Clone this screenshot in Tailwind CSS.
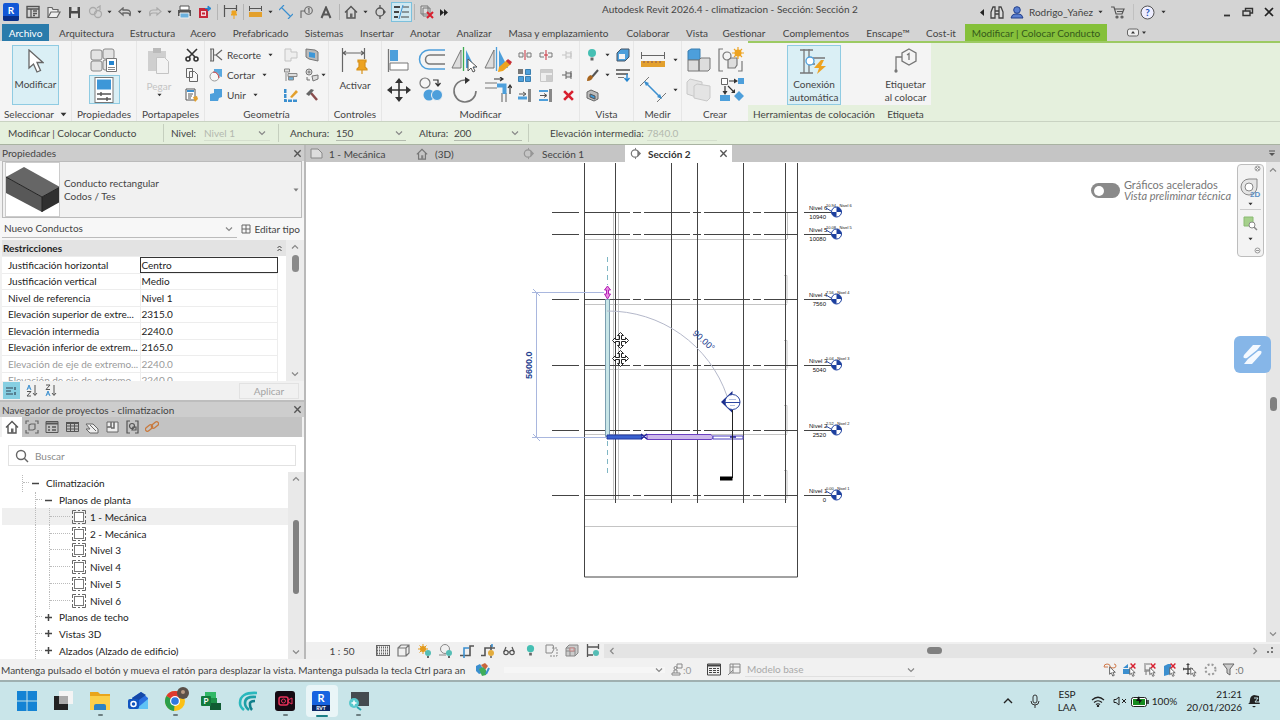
<!DOCTYPE html>
<html lang="es">
<head>
  <meta charset="UTF-8">
  <meta name="viewport" content="width=device-width, initial-scale=1.0">
  <title>Autodesk Revit 2026.4 - climatizacion</title>
  <script src="https://cdn.jsdelivr.net/npm/@tailwindcss/browser@4"></script>
</head>
<body class="flex h-screen flex-col overflow-hidden bg-[#f2f2f2] font-['Lato','Open_Sans',sans-serif] text-[10px] leading-[14px] text-[#444]">

  <!-- Shared icons -->
  <svg class="hidden">
    <symbol id="down" viewBox="0 0 6 4"><path d="M.5.5h5L3 3.5z" fill="#333"/></symbol>
    <symbol id="chev" viewBox="0 0 8 6"><path d="M1 1.500l3 3 3-3" fill="none" stroke="#888" stroke-width="1.200"/></symbol>
    <symbol id="close" viewBox="0 0 10 10"><path d="M1.500 1.500l7 7M8.500 1.500l-7 7" stroke="#555" stroke-width="1.500"/></symbol>
    <symbol id="cursor" viewBox="0 0 16 24"><path d="M1 1v18l4.500-4 3.500 8 3.500-1.500-3.500-8H15z" fill="#fff" stroke="#666" stroke-width="1.300"/></symbol>
    <symbol id="redx" viewBox="0 0 10 10"><path d="M1 1l8 8M9 1l-8 8" stroke="#d8202f" stroke-width="2.400"/></symbol>
    <symbol id="section" viewBox="0 0 14 14"><path d="M7 1v2M7 11v2" stroke="#777"/><circle cx="6.500" cy="7" r="4" fill="none" stroke="#777" stroke-width="1.300"/><path d="M9 3l4 4-4 4z" fill="#777"/></symbol>
    <symbol id="sheet" viewBox="0 0 14 14"><rect x="2.500" y="2.500" width="9" height="9" fill="#fff" stroke="#777"/><path d="M.5 4V.5H4M10 .5h3.500V4M13.500 10v3.500H10M4 13.500H.5V10M6 .5h2M6 13.500h2M.5 6v2M13.500 6v2" fill="none" stroke="#666"/></symbol>
    <symbol id="bulb" viewBox="0 0 10 14"><circle cx="5" cy="5" r="4" fill="#45bfb3"/><path d="M3.500 9.500h3v3h-3z" fill="#666"/></symbol>
    <symbol id="house" viewBox="0 0 14 14"><path d="M1 7.500L7 1.500l6 6M3 6v7h8V6" fill="none" stroke="#555" stroke-width="1.400"/><path d="M6 8.500h2.500V13H6z" fill="#666"/></symbol>
    <symbol id="sel" viewBox="0 0 8 12"><path d="M.7.7v8.500l2-1.800 1.600 3.800 1.700-.8-1.600-3.500h2.800z" fill="#fff" stroke="#555"/></symbol>
  </svg>

  <!-- Title bar -->
  <header class="bg-[#d4d4d4]">
    <div class="flex h-6 items-center">
      <div class="grid shrink-0 grid-cols-[22px_22px_20px_21px_20px_9px_21px_9px_21px_9px_21px_20px_5px_21px_4px_21px_9px_21px_19px_22px_4px_20px_9px_20px_22px_5px_20px_14px] items-center justify-items-center">
        <button aria-label="Revit"><svg width="16" height="18"><rect width="16" height="18" rx="2" fill="#1257d6"/><path d="M0 13h16v3a2 2 0 0 1-2 2H2a2 2 0 0 1-2-2z" fill="#0a2f86"/><text x="8" y="11" font-size="10" font-weight="700" fill="#fff" text-anchor="middle">R</text></svg></button>
        <button aria-label="Inicio"><svg width="14" height="14" fill="none" stroke="#555"><rect x="1" y="1.500" width="12" height="11" stroke-width="1.400"/><path d="M1 4h12M5 4v8M7 6h4M7 8.500h4M7 10.500h2" stroke-width="1.300"/></svg></button>
        <button aria-label="Abrir"><svg width="14" height="13" fill="#eee" stroke="#666" stroke-width="1.200"><path d="M1 11V1.500h4l1 2h5V6"/><path d="M1 11.500L4 6h9l-3 5.500z"/></svg></button>
        <button aria-label="Guardar"><svg width="13" height="13"><path d="M1 1h11v11H1z" fill="#4b4b4b"/><path d="M3.500 1h6v4h-6zM3 7.500h7V12H3z" fill="#ddd"/></svg></button>
        <button aria-label="Sincronizar"><svg width="15" height="14" fill="none" stroke="#aaa" stroke-width="1.300"><circle cx="5" cy="6" r="3.500"/><circle cx="10" cy="9" r="3.500"/><path d="M9 3l3-2v4"/></svg></button>
        <svg width="5" height="4"><use href="#down"/></svg>
        <button aria-label="Deshacer"><svg width="14" height="10" fill="none" stroke="#666" stroke-width="1.300"><path d="M5 1L1 4.500 5 8V6h4q3 0 3 3 1.500-6-3-6H5z"/></svg></button>
        <svg width="5" height="4"><use href="#down"/></svg>
        <button aria-label="Rehacer"><svg width="14" height="10" fill="none" stroke="#aaa" stroke-width="1.200"><path d="M9 1l4 3.500L9 8V6H5Q2 6 2 9 .5 3 5 3h4z"/></svg></button>
        <svg width="5" height="4"><use href="#down"/></svg>
        <button aria-label="Imprimir"><svg width="15" height="14"><path d="M3 1h9v4H3z" fill="#fff" stroke="#555"/><path d="M1 5h13v6H1z" fill="#555"/><path d="M3 8h9v5H3z" fill="#6bb1de" stroke="#eee"/></svg></button>
        <button aria-label="Exportar"><svg width="14" height="14"><path d="M1 3h9v10H1z" fill="#c6273a"/><path d="M3 6h5v5H3z" fill="#f3d8db"/><path d="M4 7.500h3v2H4z" fill="#c6273a"/><path d="M7 3.500h4M10 1l3 2.500L10 6z" fill="#2585cf" stroke="#2585cf"/></svg></button>
        <span class="h-4 w-px bg-[#b4b4b4]"></span>
        <button aria-label="Cota"><svg width="15" height="14" fill="none" stroke="#555"><path d="M1.500 0v12M13.500 0v6M2 3.500h11" stroke-width="1.200"/><path d="M9 6h4v3l1 1H8l1-1zM11 10v4" fill="#eda321" stroke="#eda321"/></svg></button>
        <span class="h-4 w-px bg-[#b4b4b4]"></span>
        <button aria-label="Medir"><svg width="15" height="12"><path d="M1 2.500h13M1.500 0v5M13.500 0v5" stroke="#555"/><path d="M1 6h13v5H1z" fill="#e3a02d"/></svg></button>
        <svg width="5" height="4"><use href="#down"/></svg>
        <button aria-label="Cota alineada"><svg width="14" height="14" stroke="#3b8fcf" stroke-width="1.200"><path d="M2.500 2.500l9 9M0 5l5-5M9 14l5-5"/></svg></button>
        <button aria-label="Etiqueta"><svg width="14" height="13" fill="none" stroke="#666" stroke-width="1.100"><circle cx="9.500" cy="4.500" r="3.800"/><path d="M6 5H2v7M9 3l1-.5V7"/></svg></button>
        <button aria-label="Texto"><svg width="12" height="13"><path d="M1.500 12L6 1.500 10.500 12M3.500 8.500h5" fill="none" stroke="#555" stroke-width="2"/></svg></button>
        <span class="h-4 w-px bg-[#b4b4b4]"></span>
        <button aria-label="Vista 3D"><svg width="14" height="14"><use href="#house"/></svg></button>
        <svg width="5" height="4"><use href="#down"/></svg>
        <button aria-label="Sección"><svg width="14" height="14" fill="none" stroke="#555" stroke-width="1.300"><circle cx="7" cy="7" r="4"/><path d="M7 0v3M7 11v3"/><path d="M10 4l3 3-3 3z" fill="#555" stroke="none"/></svg></button>
        <button aria-label="Líneas finas" class="border border-[#7cc0dc] bg-[#cfe8f1] p-[2px]"><svg width="15" height="14"><path d="M0 2h6M0 7h5M0 12h4" stroke="#444" stroke-width="2"/><path d="M9 2h6M8 7h7M7 12h8" stroke="#444"/><path d="M9 0L5 14" stroke="#3b8fcf"/></svg></button>
        <span class="h-4 w-px bg-[#b4b4b4]"></span>
        <button aria-label="Cerrar inactivas"><svg width="14" height="14" fill="#ddd" stroke="#777"><path d="M1 1h7v8H1zM3 3h7v8H3z"/><path d="M7 7l6 6M13 7l-6 6" stroke="#d8202f" stroke-width="2"/></svg></button>
        <button aria-label="Más"><svg width="10" height="7" fill="#222"><path d="M1 0l4 3.500L1 7zM5 0l4 3.500L5 7z"/></svg></button>
      </div>
      <h1 class="w-[384px] shrink-0 pb-[6px] pl-[151px] whitespace-nowrap">Autodesk Revit 2026.4 - climatizacion - Sección: Sección 2</h1>
      <div class="ml-auto grid shrink-0 grid-cols-[10px_20px_20px_68px_10px_26px_4px_24px_8px_49px_21px_21px_22px] items-center justify-items-center">
        <svg width="4" height="7"><path d="M4 0v7L0 3.500z" fill="#222"/></svg>
        <button aria-label="Buscar"><svg width="14" height="13" fill="#ddd" stroke="#444" stroke-width="1.300"><path d="M1 6l2-5h2v11H1zM13 6l-2-5H9v11h4zM5 5h4v3H5z"/></svg></button>
        <button aria-label="Usuario"><svg width="14" height="13" fill="#5a7fd0" stroke="#23408c"><circle cx="7" cy="4" r="3.300"/><path d="M1 12q1-4 4-4h4q3 0 4 4z"/></svg></button>
        <button class="whitespace-nowrap">Rodrigo_Yañez</button>
        <svg width="5" height="4"><use href="#down"/></svg>
        <button aria-label="Tienda"><svg width="15" height="13" fill="none" stroke="#555" stroke-width="1.200"><path d="M0 1h3l2 7h6l2-5H4M6 5.500h6"/><circle cx="6" cy="11" r="1"/><circle cx="11" cy="11" r="1"/></svg></button>
        <span class="h-4 w-px bg-[#c0c0c0]"></span>
        <button aria-label="Ayuda"><svg width="15" height="15"><circle cx="7.500" cy="7.500" r="6.500" fill="#eef" stroke="#555"/><text x="7.500" y="11" font-size="10" font-weight="700" fill="#2456b8" text-anchor="middle">?</text></svg></button>
        <svg width="5" height="4"><use href="#down"/></svg>
        <span></span>
        <button aria-label="Minimizar"><svg width="8" height="10"><path d="M1 8.500h6" stroke="#333" stroke-width="1.800"/></svg></button>
        <button aria-label="Restaurar"><svg width="12" height="10" fill="none" stroke="#333" stroke-width="1.400"><path d="M1 4h7v4.500H1zM3.500 4V1.500h7V6H8"/></svg></button>
        <button aria-label="Cerrar"><svg width="10" height="10"><path d="M1 1l8 8M9 1L1 9" stroke="#222" stroke-width="1.700"/></svg></button>
      </div>
    </div>
    <nav class="grid h-[17px] grid-cols-[47px_75px_57px_44px_71px_56px_50px_46px_52px_117px_62px_36px_58px_86px_58px_48px_142px_60px] items-center justify-items-center pl-[2px] whitespace-nowrap">
      <a href="#" class="flex h-full w-full items-center justify-center bg-[#2a7bab] text-white">Archivo</a>
      <a href="#">Arquitectura</a>
      <a href="#">Estructura</a>
      <a href="#">Acero</a>
      <a href="#">Prefabricado</a>
      <a href="#">Sistemas</a>
      <a href="#">Insertar</a>
      <a href="#">Anotar</a>
      <a href="#">Analizar</a>
      <a href="#">Masa y emplazamiento</a>
      <a href="#">Colaborar</a>
      <a href="#">Vista</a>
      <a href="#">Gestionar</a>
      <a href="#">Complementos</a>
      <a href="#">Enscape™</a>
      <a href="#">Cost-it</a>
      <a href="#" class="flex h-full w-full items-center justify-center bg-[#85c03a] text-[#34591b]">Modificar | Colocar Conducto</a>
      <button aria-label="Minimizar cinta"><svg width="20" height="9"><rect x=".5" y="1" width="11" height="7" rx="2" fill="#eee" stroke="#666"/><path d="M4 5.500h4L6 3zM15 3.500h4L17 6z" fill="#333"/></svg></button>
    </nav>
  </header>

  <!-- Ribbon -->
  <section class="flex h-[80px] shrink-0 bg-[#e5f0dd] whitespace-nowrap">
    <div class="grid grid-cols-[72px_65px_68px_124px_53px_198px_54px_48px_66px] bg-[#f4f4f4]">
      <div class="flex flex-col items-center border-r border-[#e6e6e6] pt-1">
        <button class="flex h-[60px] w-[47px] flex-col items-center gap-1 border border-[#8fcbe2] bg-[#daeff5] pt-[3px]"><svg width="16" height="24"><use href="#cursor"/></svg>Modificar</button>
        <button class="flex items-center gap-[6px] pt-[2px]">Seleccionar <svg width="7" height="5"><use href="#down"/></svg></button>
      </div>
      <div class="flex flex-col items-center border-r border-[#e6e6e6] pt-1">
        <div class="flex h-[60px] flex-col items-center gap-[2px] pt-[2px]">
          <button aria-label="Propiedades de tipo"><svg width="28" height="26" stroke="#888" fill="#e3e3e3"><rect x="1" y="3" width="11" height="10" rx="2"/><rect x="13" y="2" width="11" height="10" rx="2"/><rect x="1" y="14" width="11" height="10" rx="2"/><rect x="13" y="13" width="11" height="10" rx="2"/><path d="M16.500 11.500h10v13h-10z" fill="#fff" stroke="#777"/><path d="M19 14h5v4h-5z" fill="#2585cf" stroke="none"/><path d="M18 20.500h7M18 22.500h7"/></svg></button>
          <button aria-label="Propiedades" class="flex h-[29px] w-[31px] items-center justify-center border border-[#8fcbe2] bg-[#daeff5]"><svg width="20" height="26"><rect x="1" y=".5" width="18" height="25" fill="#fff" stroke="#777"/><path d="M3 2.500h14v10H3z" fill="#3d97d8"/><path d="M3 17h14M3 22h14M7 15v4M13 20v4" stroke="#555" stroke-width="1.400"/></svg></button>
        </div>
        <span class="pt-[2px]">Propiedades</span>
      </div>
      <div class="flex flex-col items-center border-r border-[#e6e6e6] pt-1">
        <div class="grid h-[60px] w-full grid-cols-[44px_22px]">
          <button disabled class="flex flex-col items-center pt-[2px] text-[#c4c4c4]"><svg width="24" height="28"><path d="M1 4h18v20H1z" fill="#cfcfcf"/><path d="M6 1h8v5H6z" fill="#bbb"/><path d="M9.500 10.500h8l4 4v12h-12z" fill="#f3f3f3" stroke="#c4c4c4"/></svg><span class="pt-1">Pegar</span><svg width="5" height="4"><use href="#down"/></svg></button>
          <div class="flex flex-col items-center justify-between py-[3px]">
            <button aria-label="Cortar"><svg width="14" height="14" fill="none" stroke="#333" stroke-width="1.600"><path d="M2 1l8 8M12 1L4 9"/><circle cx="3" cy="11" r="2"/><circle cx="11" cy="11" r="2"/></svg></button>
            <button aria-label="Copiar"><svg width="12" height="14" fill="#f7f7f7" stroke="#666"><path d="M.5.500h6v9h-6zM3.500 3.500h5l3 3v7h-8z"/></svg></button>
            <button aria-label="Igualar tipo"><svg width="14" height="14"><path d="M1 1h9v11H1z" fill="#fff" stroke="#555"/><path d="M2 2h7v2H2z" fill="#3b8fcf"/><path d="M3 6h5M3 8h4M3 10h3" stroke="#555"/><path d="M8 9l4-1 1 3-3 3z" fill="#e3a02d"/></svg></button>
          </div>
        </div>
        <span class="pt-[2px]">Portapapeles</span>
      </div>
      <div class="flex flex-col items-center border-r border-[#e6e6e6] pt-1">
        <div class="grid h-[60px] w-full grid-cols-[70px_24px_18px_10px] grid-rows-3 items-center pl-1">
          <button class="flex items-center gap-1"><svg width="14" height="14" fill="none" stroke="#666" stroke-width="1.200"><path d="M1 1h4M1 13h4M2 1v12M4.500 1v12M13 2L7 7l6 5M7 7H5"/></svg>Recorte <svg class="ml-[3px]" width="5" height="4"><use href="#down"/></svg></button>
          <svg class="justify-self-center" width="14" height="14" fill="#eee" stroke="#c4c4c4"><path d="M1 1h6v3h6v6H7v3H1z"/></svg>
          <svg class="justify-self-center" width="14" height="14"><path d="M1 1l9 1 3 2v9l-9-2-3-2z" fill="#bbb" stroke="#777"/><path d="M4 4l6 1v5l-6-1z" fill="#3d97d8"/></svg>
          <span></span>
          <button class="flex items-center gap-1"><svg width="14" height="14"><path d="M5 1h8v8l-4-1-4-4z" fill="#5aa9e0"/><circle cx="5.500" cy="8.500" r="4.500" fill="#f7f7f7" stroke="#999"/><path d="M4 4q5 0 6 6" stroke="#cc4450" fill="none"/></svg>Cortar <svg class="ml-[3px]" width="5" height="4"><use href="#down"/></svg></button>
          <svg class="justify-self-center" width="14" height="14" fill="#ddd" stroke="#888"><path d="M.5 1h5v3h-5zM4 5.500h9v3H4z"/><path d="M4.500 9h5v3h-5z" fill="#6bb1de"/><path d="M2 5v8"/></svg>
          <svg class="justify-self-center" width="14" height="14" fill="#ddd" stroke="#777"><circle cx="4" cy="4" r="3"/><circle cx="4" cy="4" r="1"/><path d="M7 8l6-1v4l-5 2zM2 9v3h3"/></svg>
          <svg width="5" height="4"><use href="#down"/></svg>
          <button class="flex items-center gap-1"><svg width="14" height="14" fill="#4d9fdb"><path d="M5 1h8v8l-3 1-1 3H1V6l4-1z"/></svg>Unir <svg class="ml-[3px]" width="5" height="4"><use href="#down"/></svg></button>
          <svg class="justify-self-center" width="15" height="14"><path d="M1 1v12h12" stroke="#3b8fcf" stroke-width="3" fill="none" stroke-dasharray="4 1"/><path d="M6 9l6-7 2 2-6 6z" fill="#e3a02d"/></svg>
          <svg class="justify-self-center" width="14" height="14"><path d="M6 5l6 7" stroke="#8a4c4c" stroke-width="2.500"/><path d="M1 6l5-5 3 1-5 6z" fill="#666"/></svg>
        </div>
        <span class="pt-[2px]">Geometría</span>
      </div>
      <div class="flex flex-col items-center border-r border-[#e6e6e6] pt-1">
        <button class="flex h-[60px] flex-col items-center gap-[3px] pt-[2px]"><svg width="28" height="28" fill="none" stroke="#666" stroke-width="1.200"><path d="M1.500 1v24M23.500 1v11M2 6h21M5 4L2 6l3 2M20 4l3 2-3 2"/><path d="M17 13h8v2h-1v5l2 2v1H16v-1l2-2v-5h-1zM21 23v4" fill="#eda321" stroke="#d8921a"/></svg>Activar</button>
        <span class="pt-[2px]">Controles</span>
      </div>
      <div class="flex flex-col items-center border-r border-[#e6e6e6] pt-1">
        <div class="flex h-[60px] w-full">
          <div class="grid w-[132px] grid-cols-4 grid-rows-2 items-center justify-items-center">
            <button aria-label="Alinear"><svg width="24" height="25"><path d="M1.500 1v23" stroke="#777" stroke-width="1.300"/><path d="M3 2h8v11H3z" fill="#4d9fdb"/><path d="M3 15h18v7H3z" fill="#fff" stroke="#777"/></svg></button>
            <button aria-label="Desfase"><svg width="28" height="24" fill="none" stroke-width="1.500"><path d="M27 2H11a9 9 0 0 0 0 19h16" stroke="#4d9fdb"/><path d="M27 7H12a4.500 4.500 0 0 0 0 9h15" stroke="#777"/></svg></button>
            <button aria-label="Simetría eje"><svg width="28" height="26"><path d="M10 3v18H1z" fill="#ddd" stroke="#777"/><path d="M15 3v18h9z" fill="#4d9fdb"/><path d="M12.500 0v24" stroke="#3cab50" stroke-width="1.300"/><path d="M17 12v12l3-3 2 4 2-1-2-4h4z" fill="#fff" stroke="#555"/></svg></button>
            <button aria-label="Simetría dibujar"><svg width="28" height="26"><path d="M10 3v18H1z" fill="#ddd" stroke="#777"/><path d="M15 3v18h9z" fill="#4d9fdb"/><path d="M12.500 0v24" stroke="#4d9fdb" stroke-width="1.300"/><path d="M14 25l1-5 8-7 4 4-8 7z" fill="#eda321"/><path d="M22 14l2-2 4 3-2 3z" fill="#c8303c"/></svg></button>
            <button aria-label="Desplazar"><svg width="24" height="24"><path d="M12 3v18M3 12h18" stroke="#333" stroke-width="1.600"/><path d="M12 0l4 5H8zM12 24l4-5H8zM0 12l5-4v8zM24 12l-5-4v8z" fill="#333"/></svg></button>
            <button aria-label="Copiar"><svg width="26" height="26"><circle cx="6" cy="6" r="5" fill="none" stroke="#777" stroke-width="1.200"/><path d="M14 3h5v5M16.500 6l2.500 3 2.500-3" fill="none" stroke="#333" stroke-width="1.200"/><circle cx="10" cy="18" r="5.500" fill="#4d9fdb"/><circle cx="18" cy="18" r="5.500" fill="#4d9fdb" stroke="#f4f4f4"/></svg></button>
            <button aria-label="Girar"><svg width="26" height="26"><path d="M14 3a11 11 0 1 0 10 11" fill="none" stroke="#777" stroke-width="1.600"/><path d="M13 0l5 3-5 4z" fill="#333"/></svg></button>
            <button aria-label="Recortar"><svg width="28" height="26" fill="none" stroke="#777" stroke-width="1.200"><path d="M1 6h12M1 11h12M18 16v9M22 16v9"/><path d="M13 8.500h7.500V17" stroke="#4d9fdb" stroke-width="4"/><path d="M10 2h8M16 0l3 2-3 2M26 17V9M24 11l2-3 2 3" stroke="#333"/></svg></button>
          </div>
          <div class="grid w-[65px] grid-cols-3 grid-rows-3 items-center justify-items-center">
            <svg width="14" height="10" fill="none" stroke="#777"><path d="M1 3h4v4H1zM9 3h4v4H9z"/><path d="M7 0v10" stroke="#c8303c"/></svg>
            <svg width="14" height="10" fill="none" stroke="#777"><path d="M5 3H1v4h4M9 3h4v4H9"/><path d="M7 0v10M5 5h4" stroke="#c8303c"/></svg>
            <svg width="12" height="10" fill="#eee" stroke="#c4c4c4"><path d="M0 5h4M4 1v8M4 3h5v4H4M9 1v8"/></svg>
            <svg width="13" height="13"><path d="M0 0h5v5H0z" fill="#777"/><path d="M7.500.500h5v5h-5zM.5 7.500h5v5h-5zM7.500 7.500h5v5h-5z" fill="#4d9fdb" stroke="#3b7fb0"/></svg>
            <svg width="13" height="13"><path d="M.5.500h12v12H.5z" fill="#eee" stroke="#c8c8c8"/><path d="M1 1h11v3H1zM6 6h6v6H6z" fill="#ccc"/></svg>
            <svg width="12" height="10" fill="#ddd" stroke="#666"><path d="M0 5h4M4 1v8M4 3h5v4H4M9 1v8"/></svg>
            <svg width="14" height="13" fill="none"><path d="M11.500 0v13" stroke="#888" stroke-width="3"/><path d="M0 9h9" stroke="#4d9fdb" stroke-width="3"/><path d="M1 5h6M5 3l3 2-3 2" stroke="#555"/></svg>
            <svg width="14" height="13" fill="none"><path d="M11.500 0v13" stroke="#888" stroke-width="3"/><path d="M0 2h9M0 11h9" stroke="#4d9fdb" stroke-width="2"/><path d="M1 6.500h6M5 4.500l3 2-3 2" stroke="#555"/></svg>
            <button aria-label="Suprimir"><svg width="11" height="11" viewBox="0 0 10 10"><use href="#redx"/></svg></button>
          </div>
        </div>
        <span class="pt-[2px]">Modificar</span>
      </div>
      <div class="flex flex-col items-center border-r border-[#e6e6e6] pt-1">
        <div class="grid h-[60px] w-full grid-cols-[20px_10px_22px] grid-rows-3 items-center justify-items-center pl-[2px]">
          <svg width="10" height="14"><use href="#bulb"/></svg><svg width="5" height="4"><use href="#down"/></svg>
          <svg width="14" height="14"><path d="M1 5l4-4h8v8l-4 4H1z" fill="#4d9fdb" stroke="#456"/><path d="M3 6h6v5H3z" fill="#f4f4f4"/></svg>
          <svg width="13" height="13"><path d="M12 1L6 8" stroke="#555" stroke-width="2"/><path d="M1 12q0-5 4-6l2 2q-1 4-6 4z" fill="#a8651e"/></svg><svg width="5" height="4"><use href="#down"/></svg>
          <svg width="14" height="13"><path d="M0 1h14M0 5h12" stroke="#777" stroke-width="2"/><path d="M2 8.500h6" stroke="#777"/><path d="M11 5v6M8.500 9l2.500 3 2.500-3" stroke="#2585cf" fill="none" stroke-width="1.400"/></svg>
          <svg width="13" height="13"><path d="M1 3l4-2 7 3v6l-4 2-7-3z" fill="#bbb" stroke="#666"/><path d="M4 5l5 2v3L4 8z" fill="#3d97d8" stroke="#555"/></svg>
        </div>
        <span class="pt-[2px]">Vista</span>
      </div>
      <div class="flex flex-col items-center border-r border-[#e6e6e6] pt-1">
        <div class="grid h-[60px] w-full grid-cols-[34px_10px] grid-rows-2 items-center justify-items-center pl-[2px]">
          <button aria-label="Regla"><svg width="26" height="16"><path d="M1.500 0v7M24.500 0v7M2 3.500h22" stroke="#666"/><path d="M1 9h24v6H1z" fill="#e3a02d"/><path d="M4 9v2M8 9v2M12 9v2M16 9v2M20 9v2" stroke="#855"/></svg></button><svg width="5" height="4"><use href="#down"/></svg>
          <button aria-label="Distancia"><svg width="26" height="26"><path d="M5 5l16 16" stroke="#3b8fcf" stroke-width="1.600"/><path d="M0 9l9-9M17 25l9-9" stroke="#777"/><path d="M4 4l5 2-3 3zM22 22l-5-2 3-3z" fill="#3b8fcf"/></svg></button><svg width="5" height="4"><use href="#down"/></svg>
        </div>
        <span class="pt-[2px]">Medir</span>
      </div>
      <div class="flex flex-col items-center pt-1">
        <div class="grid h-[60px] w-full grid-cols-2 grid-rows-2 items-center justify-items-center">
          <svg width="26" height="25" stroke="#777"><path d="M2 3l3-2h9v11H2z" fill="#4d9fdb" stroke="#3b7fb0"/><path d="M2 12h11v11H2zM13 12l2-2h9v11l-2 2h-9z" fill="#ddd"/></svg>
          <svg width="28" height="28" fill="none" stroke="#777" stroke-width="1.200"><path d="M5 3H1v22h4M20 25h4V15"/><circle cx="9" cy="10" r="4"/><path d="M10 14l3-2h6v7l-2 3h-7z" fill="#ddd"/><circle cx="20" cy="7" r="3.500" fill="#eda321" stroke="none"/><path d="M20 1v12M14 7h12M16 3l8 8M24 3l-8 8" stroke="#eda321"/></svg>
          <svg width="26" height="26" fill="#e4e4e4" stroke="#c8c8c8"><path d="M1 5l3-3 12 3v14l-3 2-12-4z"/><path d="M8 9l3-2 13 2v12l-3 3-13-3z"/></svg>
          <svg width="26" height="26"><path d="M2.500 1.500h6v6h-6z" fill="#fff" stroke="#666"/><path d="M19 1h6v6h-6zM1 18h10v6H1zM20 14l5 5-5 5-5-5z" fill="#4d9fdb"/><path d="M10 4h6M6 9v7M9 9l6 6" stroke="#333" stroke-width="1.200"/><path d="M15 1.500l4 2.500-4 2.500zM3.500 14h5L6 18zM16 12v4h-4z" fill="#333"/></svg>
        </div>
        <span class="pt-[2px]">Crear</span>
      </div>
    </div>
    <div class="flex w-[132px] flex-col items-center border-t-2 border-[#9cca62] text-center">
      <div class="flex h-[62px] w-full justify-center bg-[#f4f4f4] pt-[2px]">
        <button class="flex h-[60px] w-[54px] flex-col items-center border border-[#8fcbe2] bg-[#daeff5] pt-[2px] leading-[13px]"><svg class="mb-1 shrink-0" width="28" height="26" fill="none" stroke="#777" stroke-width="1.300"><path d="M4 1v24M9 1v24M0 2h13M0 25h13M9 10h16M9 16h6"/><circle cx="10" cy="13" r="4" fill="#fff" stroke="#4d9fdb"/><path d="M21 12l-7 8h5l-2 6 9-8h-5l3-6z" fill="#eda321" stroke="none"/></svg>Conexión<br>automática</button>
      </div>
      <span class="pt-[2px]">Herramientas de colocación</span>
    </div>
    <div class="flex w-[51px] flex-col items-center border-t-2 border-[#9cca62] text-center">
      <button class="flex h-[62px] w-full flex-col items-center bg-[#f4f4f4] pt-[5px] leading-[13px]"><svg class="mb-1 shrink-0" width="26" height="26" fill="none" stroke="#777" stroke-width="1.300"><path d="M16 1l7 4v8l-7 4-7-4V5zM9 9H3v14"/><path d="M14 7l2-1.500V12"/><circle cx="3" cy="23" r="1" fill="#555"/></svg>Etiquetar<br>al colocar</button>
      <span class="pt-[2px]">Etiqueta</span>
    </div>
    <div class="flex-1 border-t-2 border-[#9cca62]"></div>
  </section>

  <!-- Options bar -->
  <section class="grid h-[24px] shrink-0 grid-cols-[155px_8px_33px_66px_20px_46px_70px_13px_35px_68px_28px_97px_70px] items-center border-y border-t-[#c9d3c2] border-b-[#a9b3a2] bg-[#e5f0dd] pl-2 whitespace-nowrap">
    <span>Modificar | Colocar Conducto</span>
    <span class="h-[18px] w-px bg-[#c5cfbe]"></span>
    <label for="nivel">Nivel:</label>
    <span class="relative flex items-center"><select id="nivel" disabled class="w-full appearance-none border-b border-[#d5dfce] text-[#b3b8ae]"><option>Nivel 1</option></select><svg class="absolute right-1" width="8" height="6"><use href="#chev"/></svg></span>
    <span class="ml-2 h-[18px] w-px bg-[#c5cfbe]"></span>
    <label for="anchura">Anchura:</label>
    <span class="relative flex items-center"><select id="anchura" class="w-full appearance-none border-b border-[#b3bbae]"><option>150</option></select><svg class="absolute right-[3px]" width="8" height="6"><use href="#chev"/></svg></span>
    <span></span>
    <label for="altura">Altura:</label>
    <span class="relative flex items-center"><select id="altura" class="w-full appearance-none border-b border-[#b3bbae]"><option>200</option></select><svg class="absolute right-[3px]" width="8" height="6"><use href="#chev"/></svg></span>
    <span class="ml-[6px] h-[18px] w-px bg-[#c5cfbe]"></span>
    <label for="elev">Elevación intermedia:</label>
    <input id="elev" disabled value="7840.0" class="w-full border-b border-[#d5dfce] text-[#b3b8ae]">
  </section>

  <!-- Workspace -->
  <div class="flex min-h-0 flex-1">
    <aside class="flex w-[306px] shrink-0 flex-col border-r-2 border-[#b9b9b9] bg-[#f1f1f1]">
      <div class="flex h-[16px] shrink-0 items-center justify-between bg-[#cdcdcd] pr-[2px] pl-[2px]"><h2>Propiedades</h2><button aria-label="Cerrar propiedades"><svg width="9" height="9" viewBox="0 0 10 10"><use href="#close"/></svg></button></div>
      <button class="mx-[2px] flex h-[57px] shrink-0 items-center border border-[#bbb] px-[2px] text-left leading-[13px]">
        <svg class="border border-[#ccc] bg-white" width="55" height="55"><path d="M0 14l18-10 36 20-18 10z" fill="#666"/><path d="M0 14l36 20v15L0 30z" fill="#585858"/><path d="M36 34l18-10v15L36 49z" fill="#303030"/><path d="M0 14l36 20 18-10M36 34v15" fill="none" stroke="#222"/></svg>
        <span class="flex-1 pl-1">Conducto rectangular<br>Codos / Tes</span>
        <svg width="6" height="4" class="opacity-60"><use href="#down"/></svg>
      </button>
      <div class="flex h-[22px] shrink-0 items-center bg-[#f7f7f7] pr-[4px] pl-[2px]">
        <span class="relative flex flex-1 items-center"><select aria-label="Elementos" class="w-full appearance-none border-b border-[#bbb] pb-[2px] pl-[2px]"><option>Nuevo Conductos</option></select><svg class="absolute right-[4px]" width="8" height="6"><use href="#chev"/></svg></span>
        <button class="flex items-center gap-[3px] pl-1"><svg width="10" height="10" fill="none" stroke="#666"><path d="M1 1h8v8H1zM1 5h8M5 1v8"/></svg>Editar tipo</button>
      </div>
      <div class="flex min-h-0 shrink-0 pl-[2px]">
        <div class="flex-1">
          <div class="flex h-[16px] items-center justify-between bg-[#e3e3e3] pr-1 pl-px font-bold text-[#222]"><span>Restricciones</span><svg width="5" height="6" fill="none" stroke="#444"><path d="M.5 3l2-2 2 2M.5 6l2-2 2 2"/></svg></div>
          <div class="h-[125px] overflow-hidden bg-white">
            <table class="h-[133px] w-[276px] table-fixed border-collapse text-[#222]"><colgroup><col class="w-[138px]"><col></colgroup><tbody id="props"></tbody></table>
          </div>
        </div>
        <div class="flex w-[18px] flex-col items-center justify-between bg-[#ececec] py-1"><svg class="rotate-180" width="8" height="6"><use href="#chev"/></svg><span class="mb-auto mt-[5px] h-[17px] w-[7px] rounded-sm bg-[#8a8a8a]"></span><svg width="8" height="6"><use href="#chev"/></svg></div>
      </div>
      <div class="flex h-[19px] shrink-0 items-center gap-[6px] pr-[5px] pl-[3px]">
        <button aria-label="Agrupar" class="flex h-[17px] w-[17px] items-center justify-center bg-[#86cfe2]"><svg width="11" height="10" stroke="#345" stroke-width="1.200"><path d="M0 2h7M0 5h5M0 8h7M9 1v3M9 6v3"/></svg></button>
        <button aria-label="Orden ascendente" class="w-[13px]"><svg width="12" height="13" fill="none"><path d="M1 6l2-5 2 5M2 4h2" stroke="#3b8fcf"/><path d="M1 7.500h4L1 12h4M9 1v10M7 9l2 2.500L11 9" stroke="#555"/></svg></button>
        <button aria-label="Orden descendente" class="w-[13px]"><svg width="12" height="13" fill="none"><path d="M1 12l2-5 2 5M2 10h2" stroke="#3b8fcf"/><path d="M1 1h4L1 5.500h4M9 1v10M7 9l2 2.500L11 9" stroke="#555"/></svg></button>
        <button disabled class="ml-auto h-4 w-[60px] border border-[#e2e2e2] text-[#a4a4a4]">Aplicar</button>
      </div>
      <div class="flex h-[17px] shrink-0 items-center justify-between border-t-2 border-[#bdbdbd] bg-[#cdcdcd] pr-[2px] pl-[2px]"><h2>Navegador de proyectos - climatizacion</h2><button aria-label="Cerrar navegador"><svg width="9" height="9" viewBox="0 0 10 10"><use href="#close"/></svg></button></div>
      <div class="mx-[2px] grid h-[20px] shrink-0 grid-cols-[repeat(8,20px)] items-center justify-items-center bg-[#c3c3c3]">
        <button aria-label="Todo" class="flex h-full w-full items-center justify-center bg-white"><svg width="14" height="14"><use href="#house"/></svg></button>
        <svg width="14" height="14" fill="none" stroke="#666" stroke-width="1.200"><path d="M1 4V1h3M10 1h3v3M1 10v3h3M10 13h3v-3M4 5l2-1h4v5l-2 1H4z"/></svg>
        <svg width="14" height="14" fill="none" stroke="#555"><path d="M1 1.500h12v11H1z"/><path d="M1 3.500h12" stroke-width="2"/><path d="M3 7h2M7 7h4M3 10h2M7 10h4" stroke-width="1.500"/></svg>
        <svg width="13" height="12" fill="none" stroke="#555"><path d="M.5 1.500h12v9H.5zM.5 5h12M.5 8h12M4.500 2v9M8.500 2v9"/><path d="M0 2h13" stroke-width="2"/></svg>
        <svg width="14" height="13" fill="#eee" stroke="#666"><path d="M1 3h7l5 5v4H5L1 8h4z"/><path d="M5 4l6 6"/></svg>
        <svg width="13" height="12" fill="#eee" stroke="#666"><path d="M1 1h11v10H1z"/><path d="M5 1v5H1M8 1v6H5" stroke-width="1.500"/></svg>
        <svg width="13" height="14" fill="none" stroke="#555" stroke-width="1.200"><path d="M4 1H1v12h3M9 1h3v12H9M7 7h3v3H6z"/><circle cx="6" cy="6" r="2.500"/></svg>
        <svg width="14" height="14" fill="none" stroke="#c97a3e" stroke-width="1.300"><rect x="0" y="6" width="8" height="4" rx="2" transform="rotate(-40 4 8)"/><rect x="6" y="3" width="8" height="4" rx="2" transform="rotate(-40 10 5)"/></svg>
      </div>
      <div class="flex shrink-0 bg-white px-2 pt-2 pb-[6px]">
        <label class="flex h-[21px] w-[289px] items-center border border-[#e2e2e2] pl-[6px]"><svg width="14" height="14" fill="none" stroke="#666" stroke-width="1.400"><circle cx="6" cy="6" r="4.500"/><path d="M9 9l4 4"/></svg><input placeholder="Buscar" aria-label="Buscar" class="ml-[6px] flex-1 outline-none placeholder:text-[#8a8a8a]"></label>
      </div>
      <div class="flex min-h-0 flex-1 bg-white pl-[2px]">
        <ul id="tree" class="mt-[3px] flex h-[184px] flex-1 flex-col text-[#222]"></ul>
        <div class="flex w-[16px] flex-col items-center bg-[#e9e9e9] py-1"><svg class="rotate-180" width="8" height="6"><use href="#chev"/></svg><span class="mt-[38px] h-[74px] w-[6px] rounded-sm bg-[#808080]"></span><svg class="mt-auto" width="8" height="6"><use href="#chev"/></svg></div>
      </div>
    </aside>

    <main class="flex min-w-0 flex-1 flex-col">
      <div class="flex h-[17px] shrink-0 items-center bg-[#c5c5c5] whitespace-nowrap">
        <button class="flex w-[110px] items-center gap-[6px] pl-1"><svg width="13" height="11" fill="#ddd" stroke="#888"><path d="M1 1h7l4 4v5H1z"/></svg>1 - Mecánica</button>
        <button class="flex w-[106px] items-center gap-[7px]"><svg class="opacity-70" width="12" height="12" viewBox="0 0 14 14"><use href="#house"/></svg>(3D)</button>
        <button class="flex w-[103px] items-center gap-[7px]"><svg class="opacity-60" width="13" height="13"><use href="#section"/></svg>Sección 1</button>
        <div class="flex h-full w-[107px] items-center bg-white pr-1 pl-[4px]"><button class="flex flex-1 items-center gap-[6px] font-bold text-[#333]"><svg width="13" height="13"><use href="#section"/></svg>Sección 2</button><button aria-label="Cerrar vista"><svg width="9" height="9" viewBox="0 0 10 10"><use href="#close"/></svg></button></div>
        <button aria-label="Lista de vistas" class="mr-1 ml-auto"><svg width="8" height="7"><path d="M1 1h6" stroke="#555"/><path d="M1 3h6L4 6z" fill="#555"/></svg></button>
      </div>
      <div class="flex min-h-0 flex-1">
        <div class="relative min-w-0 flex-1 overflow-hidden bg-white">
          <svg class="absolute inset-0 h-full w-full" fill="none"><g transform="translate(-306 -162)">
            <g stroke="#c4c4c4">
              <path d="M613.500 212v288M618.500 212v288M584 239.500h203M584 304.500h203M584 369.500h203M584 434.500h203M584 499.500h203"/>
              <path d="M787.500 212v27M784 275.500h3v28M784 340.500h3v28M784 405.500h3v28M784 470.500h3v28"/>
              <path d="M584 526.500h214"/>
            </g>
            <g stroke="#444">
              <path d="M584.500 163v414h213V163"/>
              <path d="M615.500 163v340M671.500 163v340M697.500 163v340M743.500 163v340M785.500 163v340"/>
            </g>
            <g id="levels" font-family="Liberation Sans"></g>
            <path d="M607.500 257v28M607.500 441v32" stroke="#7fb6c4" stroke-dasharray="5 4"/>
            <path d="M605.500 299.500h4v137h-4z" fill="#c8e6e8" stroke="#7c9fb0"/>
            <g stroke="#a9b7de"><path d="M536.500 292v145M532 292.500h72M532 437.500h74M533 289l7 7M533 434l7 7"/></g>
            <path d="M607 311A126 126 0 0 1 727 396" stroke="#b4b8ca"/>
            <text transform="translate(532 379) rotate(-90)" font-family="Liberation Sans" font-size="9" font-weight="700" fill="#24408f">5600.0</text>
            <text transform="translate(692 334) rotate(42)" font-family="Liberation Sans" font-size="9" fill="#24408f">90.00°</text>
            <path d="M607.500 286l3 4h-2v4h2l-3 5-3-5h2v-4h-2z" fill="#e88be0" stroke="#b01fb5"/>
            <path d="M607 435h35v4h-35z" fill="#3a62cf" stroke="#2338a0"/>
            <path d="M647 434.500h64l2 2v2l-2 1h-64z" fill="#cdb9ea" stroke="#6a3fc0"/>
            <path d="M713 436h30v3h-30z" fill="#fff" stroke="#4a3fc0"/>
            <path d="M641 434l6 5M647 434l-6 5M730 437h6" stroke="#1d1d9a" stroke-width="1.500"/>
            <path d="M732.500 391L721 402l11.500 11z" fill="#1b2d8c"/>
            <circle cx="732.500" cy="402" r="7.500" fill="#fff" stroke="#2b46a0"/><path d="M725 402.500h15" stroke="#2b46a0"/><path d="M729 399.500h7M730 405.500h5" stroke="#b3bfe0"/>
            <path d="M732.500 410v68" stroke="#222"/><path d="M720 476.500h12.500v4H720z" fill="#000"/>
            <g id="grips" fill="#fff" stroke="#222"></g>
          </g></svg>

          <label class="absolute top-[17px] right-[35px] flex items-start gap-1 text-[11px] leading-[11px] text-[#777]">
            <input type="checkbox" class="peer sr-only">
            <span class="mt-1 flex h-[15px] w-[29px] items-center rounded-full bg-[#8a8a8a] px-[3px]"><span class="h-[10px] w-[10px] rounded-full bg-white"></span></span>
            <span>Gráficos acelerados<br><em>Vista preliminar técnica</em></span>
          </label>
          <div class="absolute top-[2px] right-[2px] flex h-[93px] w-[27px] flex-col items-center rounded border border-[#bdbdbd] bg-[#f3f3f3]">
            <svg class="mr-[2px] self-end" width="7" height="7" fill="none" stroke="#999"><circle cx="3.500" cy="3.500" r="2.500"/><path d="M2 2l3 3M5 2L2 5"/></svg>
            <button aria-label="Rueda 2D" class="mt-[6px]"><svg width="21" height="20" fill="#e5e5e5" stroke="#888"><path d="M9 1h8v8a8 8 0 1 1-8-8z"/><circle cx="9" cy="9" r="4" fill="#fff"/><text x="10" y="19" font-size="8" font-weight="700" fill="#5b8fc4" stroke="none" font-family="Liberation Sans">2D</text></svg></button>
            <svg class="mt-1" width="5" height="4"><use href="#down"/></svg>
            <span class="mt-[3px] h-px w-[21px] bg-[#ccc]"></span>
            <button aria-label="Zoom" class="mt-[6px]"><svg width="15" height="15"><path d="M1 1h9v9H1z" fill="#a5d08b" stroke="#8aba72"/><circle cx="9" cy="9" r="3" fill="#fff" stroke="#888"/><path d="M11 11l3 3" stroke="#888" stroke-width="1.500"/></svg></button>
            <svg class="mt-[6px]" width="5" height="4"><use href="#down"/></svg>
            <svg class="mr-[2px] mt-[6px] self-end" width="7" height="7" fill="none" stroke="#999"><circle cx="3.500" cy="3.500" r="2.500"/><path d="M2 3.500h3"/></svg>
          </div>
        </div>
        <div class="relative flex w-[14px] shrink-0 flex-col items-center bg-[#e6e6e6] py-[5px]">
          <svg class="rotate-180" width="8" height="6"><use href="#chev"/></svg><span class="mt-[224px] h-[14px] w-[7px] rounded-sm bg-[#808080]"></span><svg class="mt-auto" width="8" height="6"><use href="#chev"/></svg>
          <button aria-label="Asistente" class="absolute top-[174px] right-[9px] h-[37px] w-[37px] rounded-md bg-[#86b6e8]"><svg width="37" height="37"><path d="M10 19L19 9h8l-4 5-10 8q-5 1-3-3zM27 18l-9 10h-8l4-5 10-8q5-1 3 3z" fill="#f4f9ff"/></svg></button>
        </div>
      </div>
      <!-- View control bar -->
      <div class="flex h-[17px] shrink-0 items-center bg-[#f0f0f0]">
        <button class="w-[66px] shrink-0 pl-[6px]">1 : 50</button>
        <div class="grid w-[232px] shrink-0 grid-cols-11 items-center justify-items-center">
          <svg width="14" height="11" stroke="#666" fill="none"><rect x=".5" y=".5" width="13" height="10"/><path d="M1 2.500h12M1 5.500h12M1 8.500h12" stroke-dasharray="1 1" stroke-width="2"/></svg>
          <svg width="13" height="13" fill="none" stroke="#777" stroke-width="1.200"><path d="M1 4h8v8H1zM1 4l3-3h8v8l-3 3M9 4l3-3"/></svg>
          <svg width="14" height="14"><circle cx="5" cy="5" r="3" fill="#e39a1d"/><path d="M5 0v10M0 5h10M1.500 1.500l7 7M8.500 1.500l-7 7" stroke="#e39a1d"/><circle cx="10" cy="9" r="3" fill="#55bdb5"/><path d="M9 12h2v2H9z" fill="#666"/></svg>
          <svg width="14" height="14"><circle cx="6" cy="5" r="4.500" fill="none" stroke="#888"/><path d="M0 11h7" stroke="#888"/><circle cx="10" cy="9" r="3" fill="#55bdb5"/><path d="M9 12h2v2H9z" fill="#666"/></svg>
          <svg width="14" height="14" fill="none" stroke-width="1.600"><path d="M0 11.500h10V2h4" stroke="#555"/><path d="M4 14V4h5" stroke="#3b8fcf"/></svg>
          <svg width="14" height="14" fill="none" stroke-width="1.600"><path d="M0 11.500h4V4h10M10 1v5" stroke="#555"/><path d="M11 0v3" stroke="#3b8fcf"/><circle cx="10" cy="9" r="3" fill="#e3ac3d"/><path d="M10 12v2" stroke="#666"/></svg>
          <svg width="12" height="10" fill="none" stroke="#555" stroke-width="1.200"><circle cx="3" cy="6.500" r="2.200"/><circle cx="9" cy="6.500" r="2.200"/><path d="M1 6l2-5M11 6L9 1M5 6h2"/></svg>
          <svg width="9" height="13" viewBox="0 0 10 14"><use href="#bulb"/></svg>
          <svg width="13" height="13" fill="none" stroke="#888"><path d="M1 1h7l1 4-2 4H1z"/><path d="M7 4h5v8H4" stroke-dasharray="2 1"/></svg>
          <svg width="14" height="13" fill="#ccc" stroke="#888"><path d="M1 4l3-3h9v8l-3 3H1zM1 7h9M5 4v8M1 4h9v8"/><path d="M5 4h4v3H5z" stroke="#c88"/></svg>
          <svg width="14" height="13" fill="none" stroke="#555" stroke-width="1.300"><path d="M1.500 0v13M12.500 0v5M1 3h11M1 11h6" /><circle cx="10" cy="9" r="3" fill="#55bdb5" stroke="none"/></svg>
        </div>
        <div class="flex h-[14px] flex-1 items-center bg-[#e4e4e4] pr-[6px] pl-[4px]">
          <svg class="rotate-90" width="8" height="6"><use href="#chev"/></svg><span class="ml-[311px] h-[7px] w-[15px] rounded bg-[#808080]"></span><svg class="mr-1 ml-auto -rotate-90" width="8" height="6"><use href="#chev"/></svg><svg class="ml-[3px]" width="8" height="8" fill="#777"><path d="M5 0h2v2H5zM5 4h2v2H5zM1 4h2v2H1z"/></svg>
        </div>
      </div>
    </main>
  </div>

  <!-- Status bar -->
  <footer class="flex h-[23px] shrink-0 items-center border-b-2 border-[#9fb0b0] bg-[#f1f1f1] whitespace-nowrap">
    <p class="w-[475px] shrink-0 pl-[1px]">Mantenga pulsado el botón y mueva el ratón para desplazar la vista. Mantenga pulsada la tecla Ctrl para an</p>
    <svg width="15" height="14"><path d="M1 3l4-2 2 3v6l-3 1-3-3z" fill="#3b8fcf"/><path d="M6 2l4-2 3 3-3 4z" fill="#c8663c"/><path d="M4 6l4-2 3 3v5l-4 1z" fill="#3fae5a"/><path d="M11 11l3-6" stroke="#3b8fcf" stroke-width="2"/></svg>
    <div class="ml-[14px] flex w-[161px] justify-end bg-[#f6f6f6] pr-[2px]"><svg width="8" height="6"><use href="#chev"/></svg></div>
    <button class="ml-[6px] flex w-[36px] items-center text-[#999]"><svg width="12" height="13" fill="none" stroke="#888"><path d="M6 1h5v4H6zM1 12h8v-2H1zM3 10V7h3v3"/><circle cx="4.500" cy="5" r="1.500"/></svg>:0</button>
    <svg width="14" height="13" fill="none" stroke="#444"><path d="M.5 1h13v11H.5z"/><path d="M1 2.500h12" stroke-width="2"/><path d="M2 5.500h10M2 7.500h10M2 9.500h10" stroke-dasharray="3 1"/></svg>
    <svg class="ml-[6px]" width="14" height="13" fill="none" stroke="#888"><path d="M3 1h10v9H3zM3 4h10M6 1v9M1 12l5-5"/></svg>
    <span class="relative ml-[4px] flex w-[170px] items-center"><select aria-label="Opción de diseño" disabled class="w-full appearance-none border-b border-[#e0e0e0] pl-[2px] text-[#a9a9a9]"><option>Modelo base</option></select><svg class="absolute right-0" width="8" height="6"><use href="#chev"/></svg></span>
    <div class="mr-[38px] ml-auto grid grid-cols-[20px_20px_20px_20px_20px_20px_22px] items-center justify-items-center">
      <svg width="14" height="14" fill="none" stroke="#d07a4c"><path d="M1 4q0-3 3-3t3 2 3 2 3-2-2-2M1 4h4"/><use href="#sel" x="6" y="3" width="7" height="11"/></svg>
      <svg width="14" height="14"><path d="M0 5l5-4v4zM0 6h7v5H0z" fill="#3b8fcf"/><use href="#redx" x="7" y="0" width="6" height="6"/><use href="#sel" x="6" y="4" width="7" height="10"/></svg>
      <svg width="14" height="14"><path d="M1 1h6M2 2v5h5M1 8h5M3 8v4" stroke="#777" fill="none"/><use href="#redx" x="7" y="0" width="6" height="6"/><use href="#sel" x="6" y="4" width="7" height="10"/></svg>
      <svg width="14" height="14"><path d="M1 3l4-2h3v10l-7 2z" fill="#3b8fcf"/><use href="#redx" x="7" y="0" width="6" height="6"/><use href="#sel" x="6" y="4" width="7" height="10"/></svg>
      <svg width="14" height="14"><path d="M5 1v10M0 6h10" stroke="#444" stroke-width="1.300"/><path d="M3 2h4L5 0zM3 10h4l-2 2zM1 4v4L0 6z" fill="#444"/><use href="#sel" x="7" y="4" width="7" height="10"/></svg>
      <svg width="13" height="13" fill="none" stroke="#999" stroke-width="2"><circle cx="6.500" cy="6.500" r="5" stroke-dasharray="2 2"/></svg>
      <span class="flex items-center pl-1 text-[#777]"><svg width="13" height="13" fill="#ccc" stroke="#666"><path d="M1 1h11L8 6v6l-3-2V6z"/></svg>:0</span>
    </div>
  </footer>

  <!-- Taskbar -->
  <nav class="flex h-[38px] shrink-0 items-center bg-[#c9e5e9] text-[#222]">
    <div class="ml-[9px] grid h-full w-[368px] shrink-0 grid-cols-10 items-center justify-items-center">
      <button aria-label="Inicio"><svg width="20" height="20" fill="#1483d4"><path d="M0 0h9.500v9.500H0zM10.500 0H20v9.500h-9.500zM0 10.500h9.500V20H0zM10.500 10.500H20V20h-9.500z"/></svg></button>
      <button aria-label="Vista de tareas"><svg width="20" height="20"><path d="M5 0h14v13H5z" fill="#f4f4f4"/><path d="M0 5h14v14H0z" fill="#222"/><path d="M5 5h9v8H5z" fill="#aaa"/></svg></button>
      <button aria-label="Explorador" class="relative"><svg width="21" height="20"><path d="M0 1h8l2 2h10v16H0z" fill="#e9a51c"/><path d="M0 5h20v14H0z" fill="#fbcf4a"/><path d="M4 19v-4q0-2 2-2h8q2 0 2 2v4z" fill="#2b82c4"/></svg><span class="absolute top-[23px] left-2 h-[2px] w-[5px] rounded bg-[#6d7f82]"></span></button>
      <button aria-label="Outlook"><svg width="20" height="20"><path d="M4 7l9-6 7 6v11H6z" fill="#2a6fe0"/><path d="M4 7l9-6 5 3L8 11z" fill="#1548a8"/><path d="M8 18l12-10v10z" fill="#5fc2f5"/><rect y="8" width="11" height="10" rx="2" fill="#1255c0"/><circle cx="5.500" cy="13" r="2.500" fill="none" stroke="#fff" stroke-width="1.500"/></svg></button>
      <button aria-label="Chrome" class="relative"><svg class="overflow-visible" width="20" height="20"><circle cx="10" cy="10" r="10" fill="#fbc116"/><path d="M10 10L1.300 5A10 10 0 0 1 18.700 5z" fill="#df3a30"/><path d="M10 10L1.300 5A10 10 0 0 0 9 20z" fill="#2b9f4b"/><circle cx="10" cy="10" r="5" fill="#fff"/><circle cx="10" cy="10" r="3.800" fill="#2f78e0"/><circle cx="18" cy="2" r="6" fill="#5b5048"/><circle cx="18" cy="1" r="2" fill="#b99a82"/></svg><span class="absolute top-[23px] left-2 h-[2px] w-[5px] rounded bg-[#6d7f82]"></span></button>
      <button aria-label="Project"><svg width="20" height="20"><path d="M4 1h11v6H4z" fill="#31b866"/><path d="M8 7h8v7H8z" fill="#1e9148"/><path d="M9 12h11v7H9z" fill="#115c33"/><rect y="5" width="10" height="10" rx="1" fill="#127a3c"/><text x="5" y="13" font-size="8" font-weight="700" fill="#fff" text-anchor="middle">P</text></svg></button>
      <button aria-label="Camtasia"><svg width="20" height="21" fill="none" stroke-width="2.600"><path d="M19 2Q2 1 2 12q0 4 4 7" stroke="#2ab8bd"/><path d="M18 6Q7 5 7 12q0 4 4 7" stroke="#1d9fa6"/><path d="M17 10q-6 0-5 4 0 3 2 5" stroke="#11808c"/></svg></button>
      <button aria-label="Grabador" class="relative"><svg width="20" height="20"><rect width="20" height="20" rx="3" fill="#150a12"/><rect x="4" y="6" width="9" height="8" rx="2" fill="none" stroke="#e8305a" stroke-width="1.500"/><path d="M13 9l4-2v6l-4-2z" fill="none" stroke="#e8305a"/><circle cx="8.500" cy="10" r="2" fill="none" stroke="#e8305a"/></svg><span class="absolute top-[23px] left-2 h-[2px] w-[5px] rounded bg-[#6d7f82]"></span></button>
      <button aria-label="Revit" class="relative flex h-8 w-8 items-center justify-center rounded bg-[#e9f5f7]"><svg width="19" height="20"><rect width="18" height="20" rx="2" fill="#1763e0"/><path d="M0 14h18v6H0z" fill="#0b2766"/><text x="9" y="11" font-size="11" font-weight="700" fill="#fff" text-anchor="middle">R</text><text x="9" y="19" font-size="5" font-weight="700" fill="#fff" text-anchor="middle">RVT</text></svg><span class="absolute bottom-0 left-[10px] h-[2px] w-3 rounded bg-[#1b7f86]"></span></button>
      <button aria-label="Lupa" class="relative"><svg width="21" height="20"><path d="M3 1h18v14H3z" fill="#454b50"/><circle cx="6" cy="12" r="5" fill="#57c8cc"/><path d="M3.500 12h5M6 9.500v5" stroke="#fff" stroke-width="1.500"/><path d="M9 16l4 3" stroke="#29a5ae" stroke-width="2"/></svg><span class="absolute top-[23px] left-2 h-[2px] w-[5px] rounded bg-[#6d7f82]"></span></button>
    </div>
    <div class="mr-[16px] ml-auto grid grid-cols-[26px_28px_36px_26px_18px_22px_27px_64px_22px] items-center justify-items-center">
      <svg width="10" height="6" fill="none" stroke="#222" stroke-width="1.400"><path d="M1 5l4-4 4 4"/></svg>
      <svg width="10" height="15" fill="none" stroke="#333"><rect x="3" y="1" width="4" height="8" rx="2"/><path d="M1 7q0 4 4 4t4-4M5 11v3"/></svg>
      <span class="text-center leading-[13px]">ESP<br>LAA</span>
      <svg width="14" height="11" fill="none" stroke="#222" stroke-width="1.200"><path d="M1 4q6-5.500 12 0M3 6.500q4-3.500 8 0M5 8.500q2-1.500 4 0"/><circle cx="7" cy="10" r=".6" fill="#222"/></svg>
      <svg width="14" height="10" fill="none" stroke="#222"><path d="M1 3.500h2L6 1v8L3 6.500H1zM9 3l4 4M13 3L9 7"/></svg>
      <svg width="18" height="11"><rect x=".5" y="1.500" width="15" height="9" rx="2" fill="#fff" stroke="#222"/><rect x="2" y="3" width="12" height="6" fill="#168a1e"/><path d="M17 4v4" stroke="#222" stroke-width="1.500"/><path d="M8 0L5 5h3v3l3-4H9z" fill="#111"/></svg>
      <span>100%</span>
      <span class="justify-self-end text-right leading-[13px]">21:21<br>20/01/2026</span>
      <svg width="13" height="14"><path d="M1 10q2-1 2-4 0-4 4-5l5 1v6l1 2z" fill="#222"/><path d="M5 12h4l-2 1.500z" fill="#222"/><path d="M7 4h4L8 8h4" stroke="#c9e5e9" fill="none"/></svg>
    </div>
  </nav>

  <script>
    const props = [
      ['Justificación horizontal', 'Centro'],
      ['Justificación vertical', 'Medio'],
      ['Nivel de referencia', 'Nivel 1'],
      ['Elevación superior de extre...', '2315.0'],
      ['Elevación intermedia', '2240.0'],
      ['Elevación inferior de extrem...', '2165.0'],
      ['Elevación de eje de extremo...', '2240.0', true],
      ['Elevación de eje de extremo...', '2240.0', true],
    ];
    document.getElementById('props').innerHTML = props.map(([name, value, off], i) => `
      <tr class="${off ? 'text-[#9a9a9a]' : ''}">
        <th scope="row" class="border border-l-0 border-[#ededed] p-0 pl-[6px] text-left font-normal whitespace-nowrap">${name}</th>
        <td class="border border-[#ededed] p-0"><div class="${i === 0 ? 'pl-px outline outline-[#333]' : 'pl-px'}">${value}</div></td>
      </tr>`).join('');

    // depth, sign, label
    const tree = [
      [0, '-', 'Climatización'], [1, '-', 'Planos de planta'],
      [2, '', '1 - Mecánica'], [2, '', '2 - Mecánica'], [2, '', 'Nivel 3'],
      [2, '', 'Nivel 4'], [2, '', 'Nivel 5'], [2, '', 'Nivel 6'],
      [1, '+', 'Planos de techo'], [1, '+', 'Vistas 3D'], [1, '+', 'Alzados (Alzado de edificio)'],
    ];
    const sign = (s) => `<svg class="ml-[10px] mr-[7px]" width="7" height="7" stroke="#444" stroke-width="1.500"><path d="M0 3.500h7${s === '+' ? 'M3.500 0v7' : ''}"/></svg>`;
    document.getElementById('tree').innerHTML = tree.map(([depth, s, label], i) => {
      const pad = ['pl-[20px]', 'pl-[33px]', 'pl-[33px]'][depth];
      const leaf = '<span class="ml-[13px] h-full w-[23px] border-l border-dotted border-[#bbb]"><span class="block h-1/2 w-5 border-b border-dotted border-[#bbb]"></span></span><svg class="mr-1" width="14" height="14"><use href="#sheet"/></svg>';
      const branch = `<span class="-mr-[7px] h-full w-[7px] border-l border-dotted border-[#bbb]"><span class="block h-1/2 border-b border-dotted border-[#bbb]"></span></span>${sign(s)}`;
      return `<li class="flex min-h-0 flex-1 items-center whitespace-nowrap ${pad} ${i === 2 ? 'bg-[#efefef]' : ''}">${depth === 2 ? '<span class="h-full border-l border-dotted border-[#bbb]"></span>' + leaf : branch}${label}</li>`;
    }).join('');

    const levels = [
      [6, 212, '10940', '10.94'], [5, 234, '10080', '10.08'], [4, 299, '7560', '7.56'],
      [3, 365, '5040', '5.04'], [2, 430, '2520', '2.52'], [1, 495, '0', '0.00'],
    ];
    document.getElementById('levels').innerHTML = levels.map(([n, y, mm, m]) => `
      <path d="M552 ${y + .5}h27M804 ${y + .5}h27" stroke="#444"/>
      <path d="M584 ${y + .5}h214" stroke="#444" stroke-dasharray="46 3 8 3"/>
      <text x="809" y="${y - 2}" font-size="6" fill="#111">Nivel ${n}</text>
      <text x="826" y="${y + 7}" font-size="6" fill="#111" text-anchor="end">${mm}</text>
      <text x="826" y="${y - 5}" font-size="4" fill="#111">${m} - Nivel ${n}</text>
      <path d="M826 ${y - 4}l5 3" stroke="#2b46a0"/>
      <circle cx="836.500" cy="${y}" r="5" fill="#fff" stroke="#1c3f9e"/>
      <path d="M836.500 ${y}v-5a5 5 0 0 1 5 5zM836.500 ${y}v5a5 5 0 0 1-5-5z" fill="#1c3f9e"/>`).join('');

    document.getElementById('grips').innerHTML = [340, 358].map((y) => `
      <path d="M620.500 ${y - 7.5}l3 3h-2v4h4v-2l3 3-3 3v-2h-4v4h2l-3 3-3-3h2v-4h-4v2l-3-3 3-3v2h4v-4h-2z"/>`).join('');
  </script>
</body>
</html>
